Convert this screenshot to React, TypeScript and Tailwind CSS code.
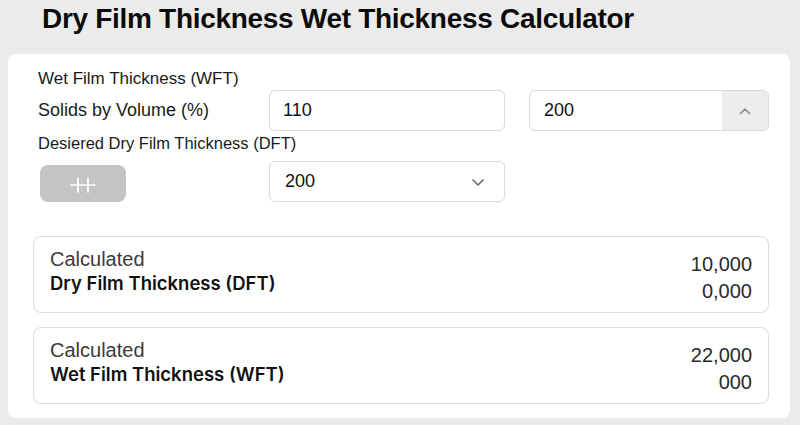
import React from "react";

const font = { fontFamily: '"Liberation Sans", Arial, sans-serif' };

const ResultCard = ({ title, top, bottom }: { title: string; top: string; bottom: string }) => (
  <div className="flex h-[77px] items-start justify-between rounded-lg border border-[#dcdcdc] bg-white pl-4 pr-4 pt-[10px]">
    <div className="flex flex-col">
      <span className="text-[20px] leading-[24px] text-[#3a3a3a]">Calculated</span>
      <span
        className="text-[18.5px] leading-[25px] font-semibold text-[#111]"
        style={{ fontFamily: 'Inter, "Liberation Sans", sans-serif' }}
      >
        {title}
      </span>
    </div>
    <div className="flex flex-col items-end pt-[4px] text-[20px] leading-[27px] text-[#2a2a2a]">
      <span>{top}</span>
      <span>{bottom}</span>
    </div>
  </div>
);

export default function App() {
  return (
    <div className="h-[425px] w-[800px] overflow-hidden bg-[#ebebeb]" style={font}>
      <h1 className="pl-[42px] pt-[2px] text-[28px] font-bold leading-[34px] text-[#0b0b0b] tracking-[-0.3px]">
        Dry Film Thickness Wet Thickness Calculator
      </h1>
      <div className="ml-[8px] mr-[10px] mt-[18px] rounded-lg bg-white pt-[14px] pl-[25px] pr-[21px] pb-[14px]">
        <div className="pl-[5px] text-[17px] leading-[22px] text-[#1a1a1a]">Wet Film Thickness (WFT)</div>
        <div className="flex items-center">
          <span className="w-[236px] pl-[5px] text-[18px] text-[#1a1a1a]">Solids by Volume (%)</span>
          <div className="flex h-[41px] w-[236px] items-center rounded-md border border-[#d8d8d8] pl-[13px] text-[18px] text-[#111]">
            110
          </div>
          <div className="ml-[24px] flex h-[41px] w-[240px] items-center overflow-hidden rounded-md border border-[#d8d8d8] text-[18px] text-[#111]">
            <span className="flex-1 pl-[14px]">200</span>
            <span className="flex h-full w-[46px] items-center justify-center bg-[#ececec]">
              <svg width="14" height="14" viewBox="0 0 14 14" fill="none" stroke="#8a8a8a" strokeWidth="1.6" strokeLinecap="round" strokeLinejoin="round">
                <path d="M2.5 9.5 7 5l4.5 4.5" />
              </svg>
            </span>
          </div>
        </div>
        <div className="pl-[5px] text-[16.5px] leading-[24px] text-[#1a1a1a]">Desiered Dry Film Thickness (DFT)</div>
        <div className="mt-[6px] flex items-center">
          <div className="w-[236px] pl-[7px] pt-[3px]">
            <button className="flex h-[37px] w-[86px] items-center justify-center rounded-lg bg-[#c4c4c4]">
              {/* two uprights crossed by one bar */}
              <svg className="mt-[3px]" width="26" height="16" viewBox="0 0 26 16" fill="none" stroke="#fff" strokeWidth="1.7" strokeLinecap="round">
                <path d="M1 8h24M8 1v14M18 1v14" />
              </svg>
            </button>
          </div>
          <div className="flex h-[41px] w-[236px] items-center justify-between rounded-md border border-[#d8d8d8] pl-[15px] pr-[18px] text-[18px] text-[#111]">
            <span>200</span>
            <svg width="16" height="16" viewBox="0 0 16 16" fill="none" stroke="#6a6a6a" strokeWidth="1.6" strokeLinecap="round" strokeLinejoin="round">
              <path d="M3 6l5 5 5-5" />
            </svg>
          </div>
        </div>
        <div className="mt-[34px] flex flex-col gap-[14px]">
          <ResultCard title="Dry Film Thickness (DFT)" top="10,000" bottom="0,000" />
          <ResultCard title="Wet Film Thickness (WFT)" top="22,000" bottom="000" />
        </div>
      </div>
    </div>
  );
}
